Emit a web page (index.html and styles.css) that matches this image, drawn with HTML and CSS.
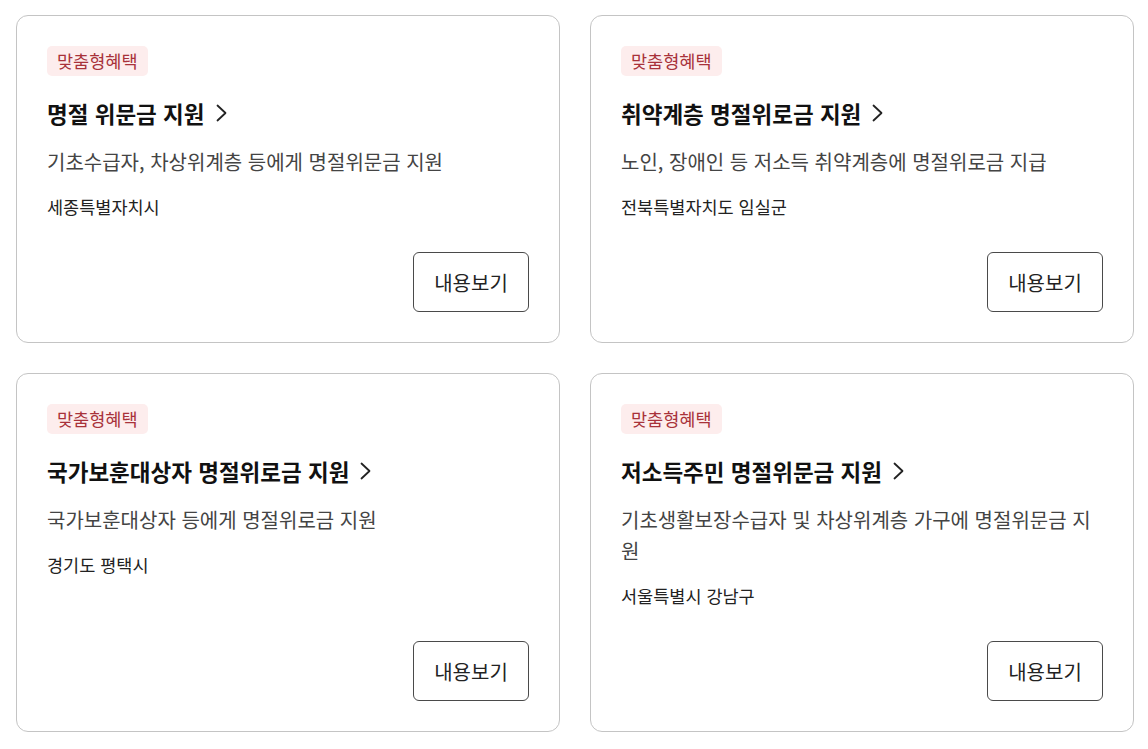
FILE: index.html
```html
<!DOCTYPE html>
<html lang="ko">
<head>
<meta charset="utf-8">
<link rel="stylesheet" href="styles.css">
</head>
<body>
<div class="grid">
  <div class="card">
    <span class="tag">맞춤형혜택</span>
    <h2 class="title">명절 위문금 지원 <svg class="chev" viewBox="0 0 11 18" width="11" height="18"><polyline points="1.5,1.5 9.5,9 1.5,16.5"/></svg></h2>
    <p class="desc">기초수급자, 차상위계층 등에게 명절위문금 지원</p>
    <p class="loc">세종특별자치시</p>
    <button class="btn">내용보기</button>
  </div>
  <div class="card">
    <span class="tag">맞춤형혜택</span>
    <h2 class="title">취약계층 명절위로금 지원 <svg class="chev" viewBox="0 0 11 18" width="11" height="18"><polyline points="1.5,1.5 9.5,9 1.5,16.5"/></svg></h2>
    <p class="desc">노인, 장애인 등 저소득 취약계층에 명절위로금 지급</p>
    <p class="loc">전북특별자치도 임실군</p>
    <button class="btn">내용보기</button>
  </div>
  <div class="card">
    <span class="tag">맞춤형혜택</span>
    <h2 class="title">국가보훈대상자 명절위로금 지원 <svg class="chev" viewBox="0 0 11 18" width="11" height="18"><polyline points="1.5,1.5 9.5,9 1.5,16.5"/></svg></h2>
    <p class="desc">국가보훈대상자 등에게 명절위로금 지원</p>
    <p class="loc">경기도 평택시</p>
    <button class="btn">내용보기</button>
  </div>
  <div class="card">
    <span class="tag">맞춤형혜택</span>
    <h2 class="title">저소득주민 명절위문금 지원 <svg class="chev" viewBox="0 0 11 18" width="11" height="18"><polyline points="1.5,1.5 9.5,9 1.5,16.5"/></svg></h2>
    <p class="desc">기초생활보장수급자 및 차상위계층 가구에 명절위문금 지원</p>
    <p class="loc">서울특별시 강남구</p>
    <button class="btn">내용보기</button>
  </div>
</div>
</body>
</html>
```
FILE: styles.css
```css
* { box-sizing: border-box; }
html, body { margin: 0; padding: 0; background: #fff; }
body {
  font-family: "Noto Sans CJK KR", "Noto Sans", sans-serif;
  color: #222;
}
.grid {
  display: grid;
  grid-template-columns: 1fr 1fr;
  column-gap: 30px;
  row-gap: 30px;
  padding: 15px 14px 0 16px;
}
.card {
  display: flex;
  flex-direction: column;
  align-items: flex-start;
  border: 1px solid #c4c4c4;
  border-radius: 12px;
  padding: 30px;
  min-width: 0;
}
.tag {
  display: inline-flex;
  align-items: center;
  height: 30px;
  padding: 0 10px;
  border-radius: 5px;
  background: #fdeded;
  color: #a8323a;
  font-size: 17.5px;
  line-height: 30px;
}
.title {
  margin: 22px 0 0;
  font-size: 22.5px;
  line-height: 30px;
  font-weight: 700;
  color: #111;
  display: flex;
  align-items: center;
  gap: 11px;
}
.chev {
  fill: none;
  stroke: #222;
  stroke-width: 1.8;
  stroke-linecap: round;
  stroke-linejoin: round;
}
.desc {
  margin: 18px 0 0;
  font-size: 20px;
  line-height: 31px;
  color: #444;
}
.loc {
  margin: 18px 0 33px;
  font-size: 17.5px;
  line-height: 24px;
  color: #222;
}
.btn {
  margin-top: auto;
  align-self: flex-end;
  width: 116px;
  height: 60px;
  border: 1px solid #4a4a4a;
  border-radius: 6px;
  background: #fff;
  font-family: inherit;
  font-size: 20px;
  color: #222;
  padding: 0;
}
```
